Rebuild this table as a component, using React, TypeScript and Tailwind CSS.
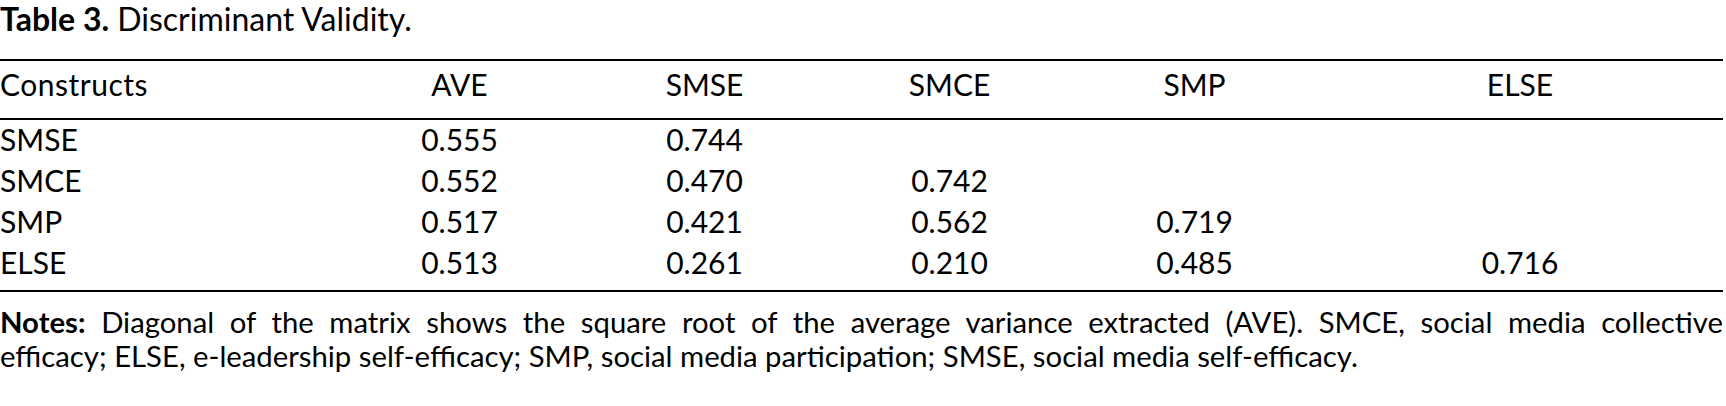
import React from "react";

const rows: { name: string; vals: string[] }[] = [
  { name: "SMSE", vals: ["0.555", "0.744", "", "", ""] },
  { name: "SMCE", vals: ["0.552", "0.470", "0.742", "", ""] },
  { name: "SMP", vals: ["0.517", "0.421", "0.562", "0.719", ""] },
  { name: "ELSE", vals: ["0.513", "0.261", "0.210", "0.485", "0.716"] },
];

const heads = ["AVE", "SMSE", "SMCE", "SMP", "ELSE"];

export default function App() {
  return (
    <div
      className="w-[1726px] h-[406px] bg-white text-black pr-[3px] overflow-hidden"
      style={{ fontFamily: "Lato, 'Open Sans', sans-serif" }}
    >
      <div className="text-[32px] leading-[38px]">
        <span className="font-bold">Table 3.</span> Discriminant Validity.
      </div>
      <div className="mt-[21px] border-t-2 border-black">
        <div className="grid grid-cols-[337px_245px_245px_245px_245px_1fr] h-[57px] items-center text-[30px] leading-[34px]">
          <div className="tracking-[0.5px]">Constructs</div>
          {heads.map((h) => (
            <div key={h} className="text-center">
              {h}
            </div>
          ))}
          <div />
        </div>
      </div>
      <div className="border-t-2 border-black pb-[6px]">
        {rows.map((r) => (
          <div
            key={r.name}
            className="grid grid-cols-[337px_245px_245px_245px_245px_1fr] h-[41px] items-center text-[30px] leading-[34px]"
          >
            <div>{r.name}</div>
            {r.vals.map((v, i) => (
              <div key={i} className="text-center">
                {v}
              </div>
            ))}
            <div />
          </div>
        ))}
      </div>
      <div className="border-t-2 border-black pt-[13px] text-[29.3px] leading-[34px]">
        <div className="text-justify [text-align-last:justify]">
          <span className="font-bold">Notes:</span> Diagonal of the matrix shows the square root
          of the average variance extracted (AVE). SMCE, social media collective
        </div>
        <div>
          efficacy; ELSE, e-leadership self-efficacy; SMP, social media participation; SMSE,
          social media self-efficacy.
        </div>
      </div>
    </div>
  );
}
